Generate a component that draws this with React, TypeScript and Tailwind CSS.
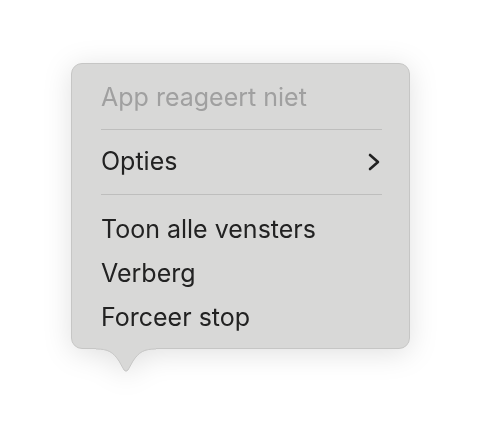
const items = ["Toon alle vensters", "Verberg", "Forceer stop"];

function Separator({ className = "" }: { className?: string }) {
  return <div className={`h-px bg-[#bebebd] ${className}`} />;
}

export default function App() {
  return (
    <div className="h-[428px] w-[482px] bg-white pl-[71px] pt-[63px] font-['Inter','Liberation_Sans',sans-serif]">
      <div className="relative w-[339px] drop-shadow-[0_4px_14px_rgba(0,0,0,0.12)]">
        <div className="rounded-[11px] border border-[#c6c6c5] bg-[#d8d8d7] pb-[8px] pl-[29px] pr-[27px] pt-[12px] text-[25px] text-[#222222]">
          <div className="flex h-[44px] items-center text-[#a0a0a0]">App reageert niet</div>
          <Separator className="mb-[10px] mt-[9px]" />
          <div className="flex h-[44px] items-center justify-between">
            <span>Opties</span>
            <svg width="14" height="20" viewBox="0 0 14 20" className="mr-[1px]">
              <polyline
                points="3,3 11,10 3,17"
                fill="none"
                stroke="#222222"
                strokeWidth="2.6"
                strokeLinecap="round"
                strokeLinejoin="round"
              />
            </svg>
          </div>
          <Separator className="mb-[13px] mt-[10px]" />
          {items.map((item) => (
            <div key={item} className="flex h-[44px] items-center">
              {item}
            </div>
          ))}
        </div>
        <svg
          className="absolute left-[25px] top-[calc(100%-1.5px)]"
          width="60"
          height="26"
          viewBox="0 0 60 26"
        >
          <path
            d="M0,0 L0,1 C12,1 17,4 23,13 L28,22 Q30,24.5 32,22 L37,13 C43,4 48,1 60,1 L60,0 Z"
            fill="#d8d8d7"
          />
          <path
            d="M0,1 C12,1 17,4 23,13 L28,22 Q30,24.5 32,22 L37,13 C43,4 48,1 60,1"
            fill="none"
            stroke="#c6c6c5"
            strokeWidth="1"
          />
        </svg>
      </div>
    </div>
  );
}
